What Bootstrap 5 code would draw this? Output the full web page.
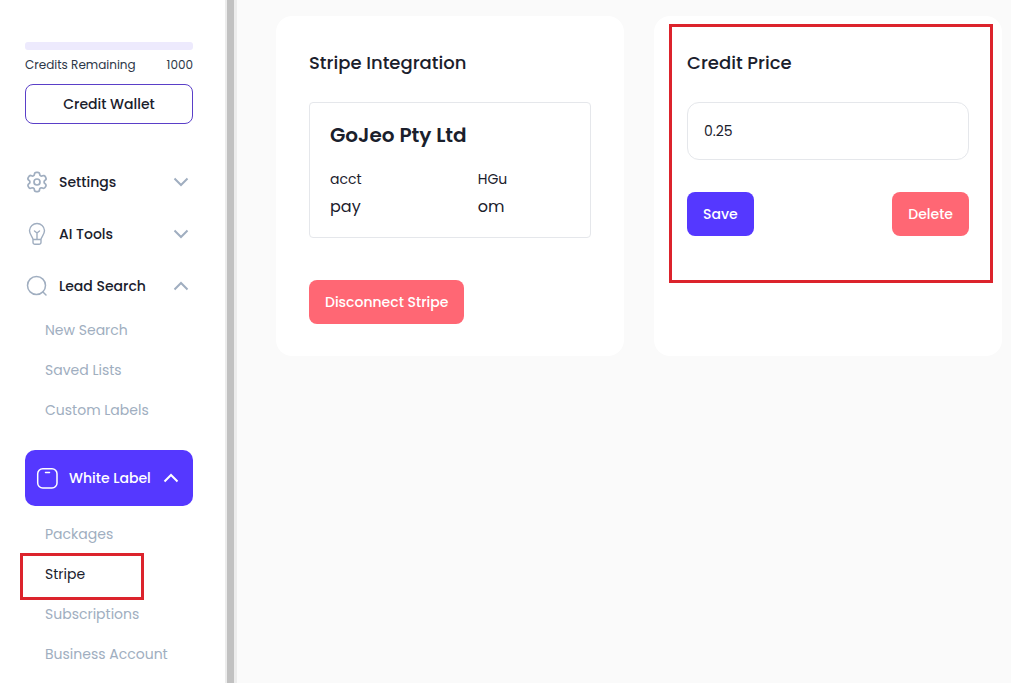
<!DOCTYPE html>
<html lang="en">
<head>
<meta charset="utf-8">
<meta name="viewport" content="width=device-width, initial-scale=1">
<title>Stripe Integration</title>
<link href="https://cdn.jsdelivr.net/npm/bootstrap@5.3.0/dist/css/bootstrap.min.css" rel="stylesheet">
<style>
:root{--ink:#1a202c;--muted:#a0aec0;--brand:#5538ff;--danger:#ff6774;--callout:#dc232c}
body{font-family:Poppins,Inter,"Open Sans",sans-serif;font-size:14px;line-height:24px;color:var(--ink);background:#fafafa}
.sidebar{width:225px;padding:42px 32px 8px 25px;background:#fff}
.scroll-track{width:12px;padding:0 3px 0 2px;background:#ececec}
.scroll-thumb{background:#c1c1c1}
.credit-bar{height:8px;border-radius:3px;background:#edeafd}
.credit-line{font-size:12px;line-height:20px;margin:5px 0 9px;color:#2d3748}
.btn{--bs-btn-font-size:14px;--bs-btn-border-radius:8px;line-height:24px}
.btn-wallet{height:40px;padding:0;border:1px solid #5a3fc8;font-weight:500;color:var(--ink);margin-bottom:34px}
.menu-row{height:48px;padding:0 4px 0 0;margin-bottom:4px;border:0;background:none;font-weight:500;color:var(--ink)}
.menu-row svg{flex:none;color:var(--muted)}
.menu-row span{margin:0 auto 0 10px}
.menu-row.open{margin-bottom:0}
.menu-row.current{height:56px;margin:20px 0 8px;padding:0 14px 0 10px;border-radius:10px;background:var(--brand);color:#fff}
.menu-row.current svg{color:#fff}
.submenu a{display:block;padding:8px 0 8px 20px;color:var(--muted);text-decoration:none}
.submenu a.active{color:var(--ink)}
.callout-frame{position:absolute;border:3px solid var(--callout);pointer-events:none}
.around-link{top:-1px;left:-5px;width:124px;height:47px}
.around-form{top:8px;left:15px;right:9px;height:259px}
.content-area{padding:16px 9px 16px 39px}
.cards{display:grid;grid-template-columns:1fr 1fr;gap:30px}
.panel{padding:33px;padding-bottom:32px;border-radius:16px;background:#fff}
.panel h2{font-size:18px;line-height:27px;font-weight:500;margin:0 0 26px}
.account{padding:20px 20px 18px;border:1px solid #e5e7eb;border-radius:4px;margin-bottom:42px}
.account h3{font-size:20px;line-height:24px;font-weight:600;margin:0 0 20px}
.account-grid{display:grid;grid-template-columns:8fr 5fr;row-gap:4px}
.account-grid .fs-wide{font-size:16px}
.btn-action{height:44px;padding:0 16px;border:0;color:#fff;font-weight:500}
.btn-save,.btn-save:hover{background:var(--brand);color:#fff}
.btn-remove,.btn-remove:hover{background:var(--danger);color:#fff}
.price-input{height:58px;padding:16px;border:1px solid #e5e7eb;border-radius:12px;font-size:14px;color:var(--ink);margin-bottom:32px}
@media(max-width:767px){.cards{grid-template-columns:1fr}}
</style>
</head>
<body>
<div class="d-flex min-vh-100">
  <aside class="sidebar flex-shrink-0">
    <div class="credit-bar"></div>
    <div class="credit-line d-flex justify-content-between"><span>Credits Remaining</span><span>1000</span></div>
    <button type="button" class="btn btn-wallet w-100">Credit Wallet</button>
    <nav>
      <button type="button" class="menu-row w-100 d-flex align-items-center">
        <svg width="24" height="24" viewBox="0 0 24 24" fill="none" stroke="currentColor" stroke-width="1.700" stroke-linejoin="round"><circle cx="12" cy="12" r="3"/><path d="M20.8 7.6l-.6-1.100c-.5-.9-1.700-1.200-2.600-.7-1.500.8-3-.1-3-1.700 0-1-.8-1.800-1.900-1.800h-1.300c-1 0-1.900.8-1.900 1.800 0 1.600-1.600 2.500-3 1.700-.9-.5-2.100-.2-2.600.7l-.7 1.100c-.5.9-.2 2 .7 2.600 1.400.8 1.400 2.700 0 3.500-.9.500-1.200 1.700-.7 2.600l.6 1.100c.5.9 1.700 1.200 2.600.7 1.400-.8 3 .1 3 1.700 0 1 .9 1.900 1.900 1.900h1.300c1 0 1.900-.9 1.900-1.900 0-1.600 1.600-2.500 3-1.700.9.500 2.100.2 2.600-.7l.7-1.100c.5-.9.2-2.100-.7-2.600-1.400-.8-1.400-2.700 0-3.500.9-.5 1.200-1.700.7-2.600z"/></svg>
        <span>Settings</span>
        <svg width="16" height="16" viewBox="0 0 16 16" fill="none" stroke="currentColor" stroke-width="2"><path d="M1.500 4.500L8 11l6.500-6.500"/></svg>
      </button>
      <button type="button" class="menu-row w-100 d-flex align-items-center">
        <svg width="24" height="24" viewBox="0 0 24 24" fill="none" stroke="currentColor" stroke-width="1.400" stroke-linecap="round" stroke-linejoin="round"><path d="M8 17.500c0-2.500-3.500-4.500-3.500-9A7.500 7.500 0 0112 1.500a7.500 7.500 0 017.500 7c0 4.500-3.500 6.500-3.500 9zM8 17.500v2.500a2 2 0 002 2.300h4a2 2 0 002-2.300v-2.500M12 17.500v-6.500M9.500 9l2.500 2 2.500-2"/></svg>
        <span>AI Tools</span>
        <svg width="16" height="16" viewBox="0 0 16 16" fill="none" stroke="currentColor" stroke-width="2"><path d="M1.500 4.500L8 11l6.500-6.500"/></svg>
      </button>
      <button type="button" class="menu-row open w-100 d-flex align-items-center" aria-expanded="true">
        <svg width="24" height="24" viewBox="0 0 24 24" fill="none" stroke="currentColor" stroke-width="1.500" stroke-linecap="round"><circle cx="11.500" cy="11.500" r="9"/><path d="M18 18l3 3"/></svg>
        <span>Lead Search</span>
        <svg width="16" height="16" viewBox="0 0 16 16" fill="none" stroke="currentColor" stroke-width="2"><path d="M1.500 11.500L8 5l6.500 6.500"/></svg>
      </button>
      <div class="submenu">
        <a href="#">New Search</a>
        <a href="#">Saved Lists</a>
        <a href="#">Custom Labels</a>
      </div>
      <button type="button" class="menu-row current w-100 d-flex align-items-center" aria-expanded="true">
        <svg width="24" height="24" viewBox="0 0 24 24" fill="none" stroke="currentColor" stroke-width="1.500" stroke-linecap="round"><rect x="2.700" y="2.700" width="19.300" height="19.300" rx="5"/><path d="M10.500 6.500h4"/></svg>
        <span>White Label</span>
        <svg width="16" height="16" viewBox="0 0 16 16" fill="none" stroke="currentColor" stroke-width="2"><path d="M1.500 11.500L8 5l6.500 6.500"/></svg>
      </button>
      <div class="submenu">
        <a href="#">Packages</a>
        <div class="position-relative">
          <a href="#" class="active" aria-current="page">Stripe</a>
          <span class="callout-frame around-link"></span>
        </div>
        <a href="#">Subscriptions</a>
        <a href="#">Business Account</a>
      </div>
    </nav>
  </aside>
  <div class="scroll-track d-flex flex-shrink-0"><div class="scroll-thumb flex-fill"></div></div>
  <main class="content-area flex-fill">
    <div class="cards">
      <section class="panel">
        <h2>Stripe Integration</h2>
        <div class="account">
          <h3>GoJeo Pty Ltd</h3>
          <div class="account-grid">
            <span>acct</span><span>HGu</span>
            <span class="fs-wide">pay</span><span class="fs-wide">om</span>
          </div>
        </div>
        <button type="button" class="btn btn-action btn-remove">Disconnect Stripe</button>
      </section>
      <section class="panel position-relative">
        <h2><label for="price">Credit Price</label></h2>
        <input id="price" type="text" class="form-control price-input" value="0.25">
        <div class="d-flex justify-content-between">
          <button type="button" class="btn btn-action btn-save">Save</button>
          <button type="button" class="btn btn-action btn-remove">Delete</button>
        </div>
        <span class="callout-frame around-form"></span>
      </section>
    </div>
  </main>
</div>
<script src="https://cdn.jsdelivr.net/npm/bootstrap@5.3.0/dist/js/bootstrap.bundle.min.js"></script>
</body>
</html>
